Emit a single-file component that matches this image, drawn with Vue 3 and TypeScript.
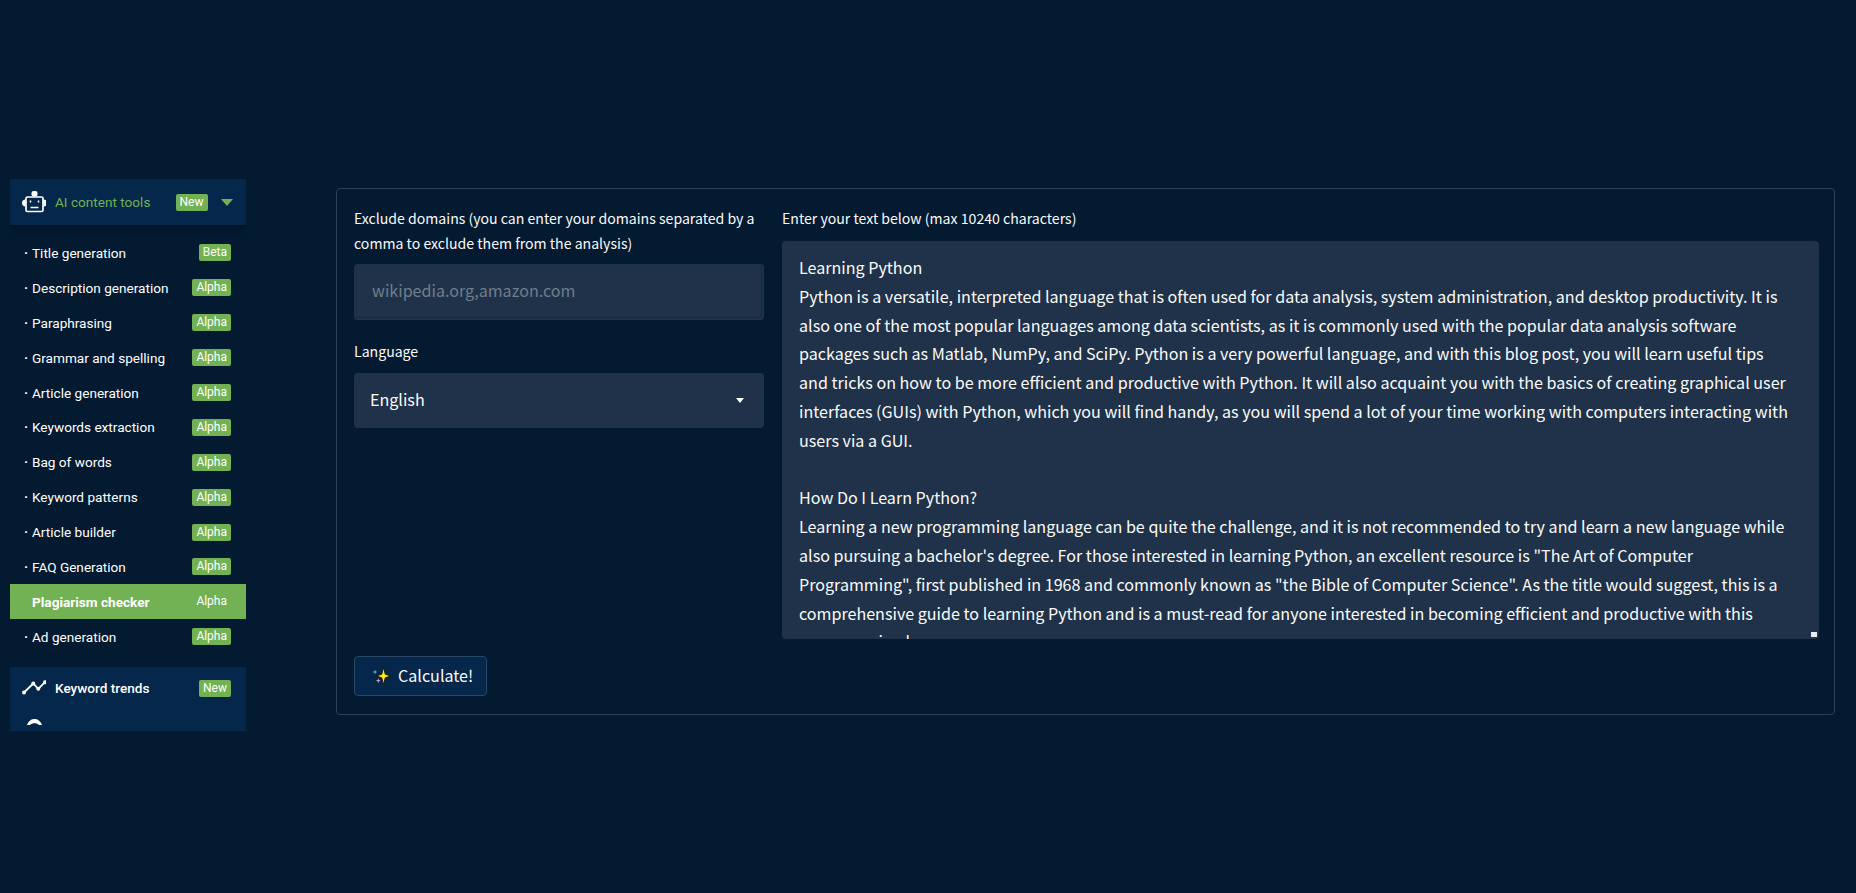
<template>
  <div class="page">
    <aside class="sidebar">
      <div class="panel panel-head">
        <svg class="panel-icon" viewBox="0 0 24 24" fill="none" stroke="#fff" stroke-width="1.700">
          <rect x="4" y="7" width="17" height="14.500" rx="1.500" />
          <rect x="9.500" y="1" width="6" height="5.500" rx="2" fill="#fff" stroke="none" />
          <path d="M3.500 9.500a3 3 0 0 0 0 7zM21.500 9.500a3 3 0 0 1 0 7z" fill="#fff" stroke="none" />
          <path d="M8.500 10.500v2M16.500 10.500v2M8.500 17.500h8" stroke-width="1.500" />
        </svg>
        <span class="panel-title green">AI content tools</span>
        <span class="badge">New</span>
        <span class="caret"></span>
      </div>

      <ul class="menu">
        <li v-for="item in tools" :key="item.name" class="menu-item" :class="{ active: item.name === current }">
          <span class="dot">·</span>
          <span class="menu-name">{{ item.name }}</span>
          <span class="badge">{{ item.tag }}</span>
        </li>
      </ul>

      <div class="panel panel-bottom">
        <div class="trend-row">
          <svg class="panel-icon" viewBox="0 0 24 24" fill="none" stroke="#fff" stroke-width="1.800" stroke-linecap="round" stroke-linejoin="round">
            <path d="M2 16.500L11.300 7.500l5 5.300L23 6.200" />
            <circle cx="2" cy="16.500" r="1.100" fill="#fff" />
            <circle cx="11.300" cy="7.500" r="1.100" fill="#fff" />
            <circle cx="16.300" cy="12.800" r="1.100" fill="#fff" />
            <circle cx="23" cy="6.200" r="1.100" fill="#fff" />
          </svg>
          <span class="panel-title">Keyword trends</span>
          <span class="badge">New</span>
        </div>
        <svg class="panel-icon next-icon" viewBox="0 0 24 24">
          <path d="M5 7C7 2 10 1 12.500 1S18 2 20 7L17 7C15 4.500 10 4.500 8 7Z" fill="#fff" />
        </svg>
      </div>
    </aside>

    <main class="card">
      <div class="form-grid">
        <div class="left-col">
          <label class="field-label">Exclude domains (you can enter your domains separated by a comma to exclude them from the analysis)</label>
          <input class="text-input" type="text" placeholder="wikipedia.org,amazon.com" />
          <label class="field-label lang-label">Language</label>
          <div class="select">
            <span>English</span>
            <span class="select-caret"></span>
          </div>
        </div>
        <div class="right-col">
          <label class="field-label text-label">Enter your text below (max 10240 characters)</label>
          <div class="text-wrap">
            <textarea class="text-area" readonly :value="bodyText"></textarea>
            <span class="resize-handle"></span>
          </div>
        </div>
      </div>
      <button class="calc-btn" type="button">
        <svg class="sparkle" viewBox="0 0 20 20">
          <path d="M11.500 1.500L13.300 8.300 19 10l-5.700 1.700-1.800 6.800-1.800-6.800L4 10l5.700-1.700z" fill="#ffe81a" stroke="#111" stroke-width="0.900" />
          <path d="M3 3.500l.6 1.900 1.900.6-1.900.6L3 8.500l-.6-1.900L.5 6l1.900-.6z" fill="#5cc6dc" />
          <path d="M6.300 12.200l.6 1.900 1.900.6-1.900.6-.6 1.900-.6-1.900-1.900-.6 1.900-.6z" fill="#e6a0c4" />
        </svg>
        Calculate!
      </button>
    </main>
  </div>
</template>

<script setup lang="ts">
const current = 'Plagiarism checker'

const tools = [
  { name: 'Title generation', tag: 'Beta' },
  { name: 'Description generation', tag: 'Alpha' },
  { name: 'Paraphrasing', tag: 'Alpha' },
  { name: 'Grammar and spelling', tag: 'Alpha' },
  { name: 'Article generation', tag: 'Alpha' },
  { name: 'Keywords extraction', tag: 'Alpha' },
  { name: 'Bag of words', tag: 'Alpha' },
  { name: 'Keyword patterns', tag: 'Alpha' },
  { name: 'Article builder', tag: 'Alpha' },
  { name: 'FAQ Generation', tag: 'Alpha' },
  { name: 'Plagiarism checker', tag: 'Alpha' },
  { name: 'Ad generation', tag: 'Alpha' }
]

const bodyText = `Learning Python
Python is a versatile, interpreted language that is often used for data analysis, system administration, and desktop productivity. It is also one of the most popular languages among data scientists, as it is commonly used with the popular data analysis software packages such as Matlab, NumPy, and SciPy. Python is a very powerful language, and with this blog post, you will learn useful tips and tricks on how to be more efficient and productive with Python. It will also acquaint you with the basics of creating graphical user interfaces (GUIs) with Python, which you will find handy, as you will spend a lot of your time working with computers interacting with users via a GUI.

How Do I Learn Python?
Learning a new programming language can be quite the challenge, and it is not recommended to try and learn a new language while also pursuing a bachelor's degree. For those interested in learning Python, an excellent resource is "The Art of Computer Programming", first published in 1968 and commonly known as "the Bible of Computer Science". As the title would suggest, this is a comprehensive guide to learning Python and is a must-read for anyone interested in becoming efficient and productive with this programming language.`
</script>

<style>
body {
  margin: 0;
  background: #031a31;
}
</style>

<style scoped>
.page {
  box-sizing: border-box;
  width: 1856px;
  height: 893px;
  padding: 179px 21px 0 10px;
  display: flex;
  align-items: flex-start;
  gap: 90px;
  background: #031a31;
  overflow: hidden;
}

.sidebar {
  flex: 0 0 236px;
  height: 552px;
  overflow: hidden;
  font-family: Roboto, sans-serif;
  font-size: 13.6px;
  color: #fff;
}

.panel {
  background: #04274b;
}

.panel-head {
  height: 46px;
  display: flex;
  align-items: center;
  padding: 0 13.500px 0 12px;
  box-shadow: 0 2px 8px rgba(0, 0, 0, 0.25);
}

.panel-icon {
  flex: 0 0 24px;
  width: 24px;
  height: 24px;
}

.panel-title {
  flex: 1;
  margin-left: 9px;
  font-weight: 500;
  white-space: nowrap;
}

.green {
  color: #72b255;
  font-weight: 400;
}

.badge {
  padding: 0 4px;
  height: 17px;
  line-height: 17px;
  font-size: 12px;
  background: #72b255;
  border-radius: 2px;
  color: #fff;
}

.caret {
  width: 0;
  height: 0;
  margin-left: 13px;
  border-left: 6px solid transparent;
  border-right: 6px solid transparent;
  border-top: 7px solid #72b255;
}

.menu {
  list-style: none;
  margin: 0;
  padding: 10.500px 0 0;
}

.menu-item {
  height: 34.900px;
  display: flex;
  align-items: center;
  padding: 0 15px 0 14px;
}

.dot {
  width: 8px;
  font-weight: 700;
}

.menu-name {
  flex: 1;
  white-space: nowrap;
}

.menu-item.active {
  background: #72b255;
  font-weight: 700;
}

.menu-item.active .dot {
  visibility: hidden;
}

.menu-item.active .badge {
  font-weight: 400;
}

.panel-bottom {
  margin-top: 12.500px;
  height: 80px;
  padding: 0 15px 0 12px;
}

.trend-row {
  height: 43px;
  display: flex;
  align-items: center;
}

.next-icon {
  display: block;
  margin-top: 8px;
}

.card {
  box-sizing: border-box;
  flex: 1;
  height: 527px;
  margin-top: 9px;
  padding: 17px 15px 17px 17px;
  border: 1px solid #2a4056;
  border-radius: 4px;
  font-family: "Noto Sans CJK JP", "Noto Sans", sans-serif;
  color: #fafafa;
}

.form-grid {
  display: flex;
  gap: 18px;
}

.left-col {
  flex: 0 0 410px;
}

.right-col {
  flex: 1;
}

.field-label {
  display: block;
  font-size: 14.100px;
  line-height: 25px;
  margin-bottom: 8px;
}

.lang-label {
  margin-top: 19px;
  margin-bottom: 9px;
}

.text-label {
  margin-bottom: 10px;
}

.text-input {
  box-sizing: border-box;
  display: block;
  width: 100%;
  height: 56px;
  padding: 0 18px 4px;
  border: none;
  border-radius: 4px;
  background: #1f3249;
  box-shadow: inset -2px -2px 0 #1f3249, inset -3px -3px 0 #17283e;
  font: inherit;
  font-size: 16.100px;
  color: #fafafa;
  outline: none;
}

.text-input::placeholder {
  color: #707d8c;
  opacity: 1;
}

.select {
  box-sizing: border-box;
  height: 55px;
  display: flex;
  align-items: center;
  justify-content: space-between;
  padding: 0 20px 4px 16px;
  border-radius: 4px;
  background: #1f3249;
  font-size: 16.100px;
}

.select-caret {
  width: 0;
  height: 0;
  margin-top: 4px;
  border-left: 4px solid transparent;
  border-right: 4px solid transparent;
  border-top: 5px solid #fff;
}

.text-wrap {
  position: relative;
  height: 398px;
}

.text-area {
  box-sizing: border-box;
  display: block;
  width: 100%;
  height: 100%;
  padding: 12px 25px 12px 17px;
  border: none;
  border-radius: 4px;
  background: #1f3249;
  font: inherit;
  font-size: 16.100px;
  line-height: 28.800px;
  color: #fafafa;
  outline: none;
  resize: none;
  overflow: hidden;
}

.resize-handle {
  position: absolute;
  right: 2px;
  bottom: 2px;
  width: 6px;
  height: 5px;
  background: #e8ecf0;
}

.calc-btn {
  display: flex;
  align-items: center;
  gap: 6px;
  height: 40px;
  margin-top: 17px;
  padding: 0 13px 2px 17px;
  border: 1px solid #2c4763;
  border-radius: 4px;
  background: #04274b;
  font: inherit;
  font-size: 16.100px;
  color: #fafafa;
}

.sparkle {
  width: 20px;
  height: 20px;
  margin-top: 2px;
}
</style>
